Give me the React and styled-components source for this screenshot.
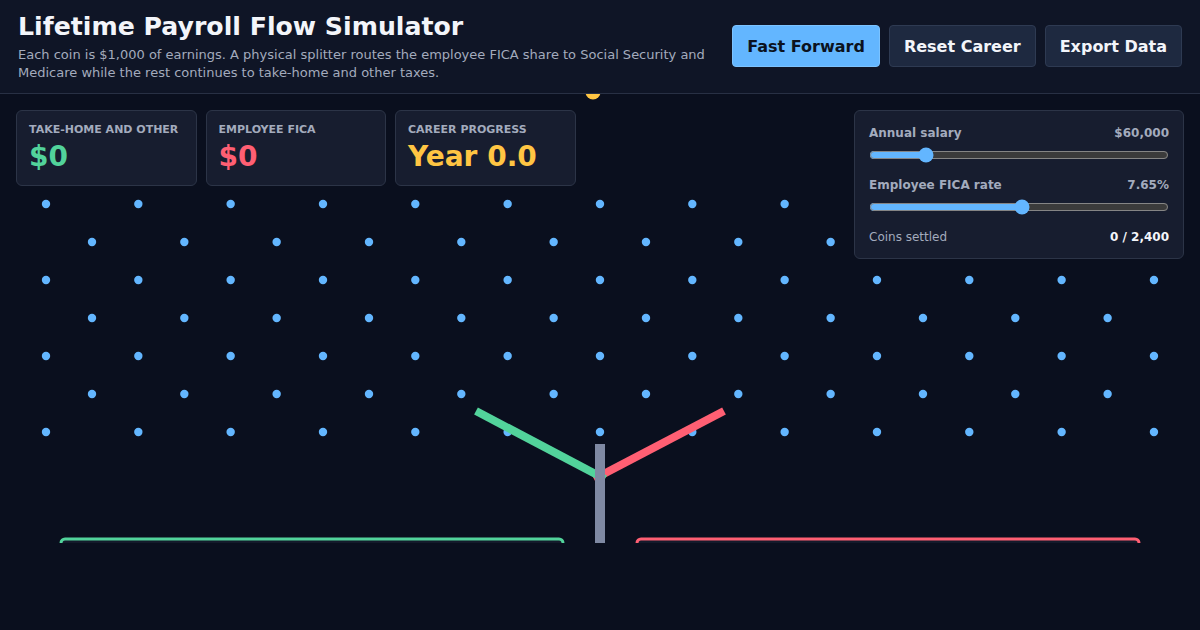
import React, { useState } from "react";
import styled, { createGlobalStyle } from "styled-components";

const colors = {
  page: "#0a0f1e",
  header: "#0f1526",
  line: "#283044",
  card: "#171d2f",
  cardBorder: "#2c3447",
  muted: "#a3abbd",
  blue: "#63b6ff",
  green: "#52d39b",
  red: "#ff5f73",
  gold: "#ffc543",
  steel: "#7f89a3",
};

const GlobalStyle = createGlobalStyle`
  html, body {
    margin: 0;
    background: ${colors.page};
    font-family: "DejaVu Sans", "Liberation Sans", sans-serif;
    color: #f3f5fa;
  }
  * { box-sizing: border-box; }
`;

const Page = styled.div`
  width: 1200px;
  height: 630px;
  overflow: hidden;
  background: ${colors.page};
`;

const Header = styled.header`
  display: flex;
  justify-content: space-between;
  align-items: center;
  height: 94px;
  padding: 10px 18px 11px 18px;
  background: ${colors.header};
  border-bottom: 1px solid ${colors.line};
`;

const Intro = styled.div`
  max-width: 700px;
`;

const Title = styled.h1`
  margin: 0 0 4px;
  font-size: 25.2px;
  line-height: 31px;
  font-weight: 700;
  color: #f3f5fa;
`;

const Subtitle = styled.p`
  margin: 0;
  font-size: 13px;
  line-height: 18px;
  color: ${colors.muted};
`;

const Actions = styled.div`
  display: flex;
  gap: 9px;
`;

const Button = styled.button`
  height: 42px;
  padding: 0 14px;
  border-radius: 4px;
  font-family: inherit;
  font-size: 16px;
  font-weight: 700;
  cursor: pointer;
  border: 1px solid ${({ $primary }) => ($primary ? "#7cc3ff" : "#2e3a52")};
  background: ${({ $primary }) => ($primary ? colors.blue : "#1e2940")};
  color: ${({ $primary }) => ($primary ? "#0b1220" : "#f3f5fa")};
`;

const Stage = styled.main`
  position: relative;
  height: 536px;
`;

const Board = styled.svg`
  display: block;
  width: 1200px;
  height: 449px;
`;

const Overlay = styled.div`
  position: absolute;
  top: 16px;
  left: 16px;
  right: 16px;
  display: flex;
  justify-content: space-between;
  align-items: flex-start;
`;

const Stats = styled.div`
  display: flex;
  gap: 9px;
`;

const StatCard = styled.div`
  width: 180.5px;
  height: 76px;
  padding: 12px 12px;
  background: ${colors.card};
  border: 1px solid ${colors.cardBorder};
  border-radius: 6px;
`;

const StatLabel = styled.div`
  font-size: 11px;
  font-weight: 700;
  color: ${colors.muted};
  text-transform: uppercase;
`;

const StatValue = styled.div`
  margin-top: 3px;
  font-size: 28px;
  line-height: 36px;
  font-weight: 700;
  color: ${({ $color }) => $color};
`;

const Panel = styled.div`
  width: 330px;
  padding: 13px 14px 12px 14px;
  background: ${colors.card};
  border: 1px solid ${colors.cardBorder};
  border-radius: 6px;
`;

const Row = styled.div`
  display: flex;
  justify-content: space-between;
  font-size: 12px;
  line-height: 18px;
  color: ${colors.muted};
  font-weight: ${({ $bold }) => ($bold ? 700 : 400)};
`;

const Strong = styled.span`
  font-weight: 700;
  color: ${({ $bright }) => ($bright ? "#f3f5fa" : colors.muted)};
`;

const Slider = styled.input`
  display: block;
  width: 100%;
  margin: 4px 0 12px;
  height: 18px;
  accent-color: ${colors.blue};
  color-scheme: dark;
`;

const pegRows = [110, 148, 186, 224, 262, 300, 338];
const step = 92.33;

const pegs = pegRows.flatMap((y, r) => {
  const even = r % 2 === 0;
  const count = even ? 13 : 12;
  const start = even ? 46 : 92;
  return Array.from({ length: count }, (_, i) => ({ x: start + i * step, y }));
});

const PegBoard = () => (
  <Board viewBox="0 0 1200 449">
    {pegs.map((p, i) => (
      <circle key={i} cx={p.x} cy={p.y} r="4.2" fill={colors.blue} />
    ))}
    <circle cx="593" cy="-2" r="7.5" fill={colors.gold} />
    <line x1="594" y1="385" x2="724" y2="317" stroke={colors.red} strokeWidth="8" />
    <line x1="476" y1="317" x2="605" y2="385" stroke={colors.green} strokeWidth="8" />
    <rect x="595" y="350" width="10" height="100" fill={colors.steel} />
    <rect x="61" y="445" width="502" height="20" rx="4" fill="#141a2b" stroke={colors.green} strokeWidth="3" />
    <rect x="637" y="445" width="502" height="20" rx="4" fill="#141a2b" stroke={colors.red} strokeWidth="3" />
  </Board>
);

export default function App() {
  const [salary, setSalary] = useState(60000);
  const [rate, setRate] = useState(7.65);

  return (
    <Page>
      <GlobalStyle />
      <Header>
        <Intro>
          <Title>Lifetime Payroll Flow Simulator</Title>
          <Subtitle>
            Each coin is $1,000 of earnings. A physical splitter routes the employee FICA share to
            Social Security and Medicare while the rest continues to take-home and other taxes.
          </Subtitle>
        </Intro>
        <Actions>
          <Button $primary>Fast Forward</Button>
          <Button>Reset Career</Button>
          <Button>Export Data</Button>
        </Actions>
      </Header>
      <Stage>
        <PegBoard />
        <Overlay>
          <Stats>
            <StatCard>
              <StatLabel>Take-home and other</StatLabel>
              <StatValue $color={colors.green}>$0</StatValue>
            </StatCard>
            <StatCard>
              <StatLabel>Employee FICA</StatLabel>
              <StatValue $color={colors.red}>$0</StatValue>
            </StatCard>
            <StatCard>
              <StatLabel>Career progress</StatLabel>
              <StatValue $color={colors.gold}>Year 0.0</StatValue>
            </StatCard>
          </Stats>
          <Panel>
            <Row $bold>
              <span>Annual salary</span>
              <span>${salary.toLocaleString("en-US")}</span>
            </Row>
            <Slider
              type="range"
              min="20000"
              max="250000"
              step="1000"
              value={salary}
              onChange={(e) => setSalary(Number(e.target.value))}
            />
            <Row $bold>
              <span>Employee FICA rate</span>
              <span>{rate.toFixed(2)}%</span>
            </Row>
            <Slider
              type="range"
              min="0"
              max="15"
              step="0.05"
              value={rate}
              onChange={(e) => setRate(Number(e.target.value))}
            />
            <Row>
              <span>Coins settled</span>
              <Strong $bright>0 / 2,400</Strong>
            </Row>
          </Panel>
        </Overlay>
      </Stage>
    </Page>
  );
}
